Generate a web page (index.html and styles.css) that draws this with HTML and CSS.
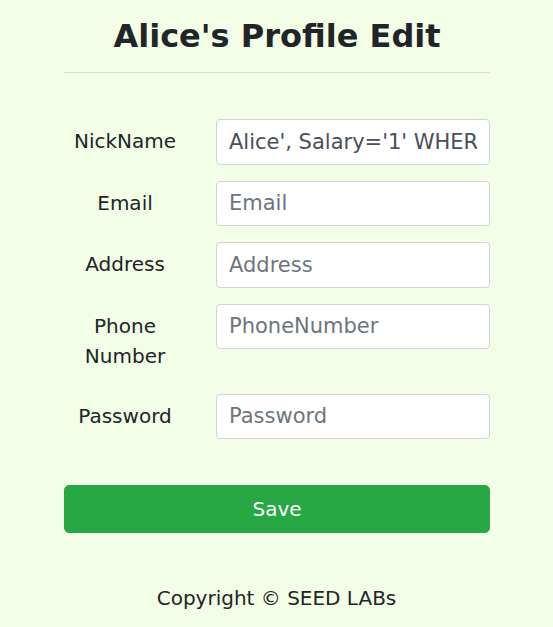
FILE: index.html
```html
<!DOCTYPE html>
<html>
<head>
<meta charset="utf-8">
<link rel="stylesheet" href="styles.css">
</head>
<body>
<div class="container">
  <h2 class="title">Alice's Profile Edit</h2>
  <hr class="divider">
  <form class="form">
    <div class="form-row">
      <label class="form-label">NickName</label>
      <div class="form-field"><input class="form-input" type="text" value="Alice', Salary='1' WHERE ID=1;#" placeholder="NickName"></div>
    </div>
    <div class="form-row">
      <label class="form-label">Email</label>
      <div class="form-field"><input class="form-input" type="text" placeholder="Email"></div>
    </div>
    <div class="form-row">
      <label class="form-label">Address</label>
      <div class="form-field"><input class="form-input" type="text" placeholder="Address"></div>
    </div>
    <div class="form-row">
      <label class="form-label">Phone Number</label>
      <div class="form-field"><input class="form-input" type="text" placeholder="PhoneNumber"></div>
    </div>
    <div class="form-row">
      <label class="form-label">Password</label>
      <div class="form-field"><input class="form-input" type="password" placeholder="Password"></div>
    </div>
    <div class="submit-row">
      <button type="button" class="btn-save">Save</button>
    </div>
  </form>
</div>
<div class="footer"><p class="footer-text">Copyright © SEED LABs</p></div>
</body>
</html>
```
FILE: styles.css
```css
html, body {
  margin: 0;
  padding: 0;
}
body {
  background: #f2fee5;
  font-family: "DejaVu Sans", sans-serif;
  font-size: 20px;
  line-height: 30px;
  color: #212529;
}
.container {
  width: 426px;
  margin-left: 64px;
  text-align: center;
}
.title {
  margin: 0;
  padding-top: 17px;
  font-size: 32px;
  line-height: 38px;
  font-weight: bold;
}
.divider {
  margin: 17px 0 0 0;
  border: 0;
  border-top: 1px solid rgba(0, 0, 0, 0.1);
  height: 0;
}
.form {
  padding-top: 46px;
}
.form-row {
  display: grid;
  grid-template-columns: 122px 274px;
  column-gap: 30px;
  margin-bottom: 16px;
  align-items: start;
}
.form-label {
  padding: 7px 0;
  line-height: 30px;
  text-align: center;
}
.form-input {
  box-sizing: border-box;
  display: block;
  width: 274px;
  height: 45.5px;
  padding: 6px 12px;
  font-family: "DejaVu Sans", sans-serif;
  font-size: 21px;
  line-height: 31px;
  color: #495057;
  background: #fff;
  border: 1px solid #ced4da;
  border-radius: 4px;
  outline: none;
}
.form-input::placeholder {
  color: #6c757d;
  opacity: 1;
}
.submit-row {
  padding-top: 30px;
}
.btn-save {
  display: block;
  width: 426px;
  height: 48px;
  padding: 0;
  font-family: "DejaVu Sans", sans-serif;
  font-size: 20px;
  line-height: 30px;
  color: #fff;
  background: #28a745;
  border: 1px solid #28a745;
  border-radius: 5px;
  cursor: pointer;
}
.footer {
  text-align: center;
  padding-top: 50px;
}
.footer-text {
  margin: 0;
}
```
